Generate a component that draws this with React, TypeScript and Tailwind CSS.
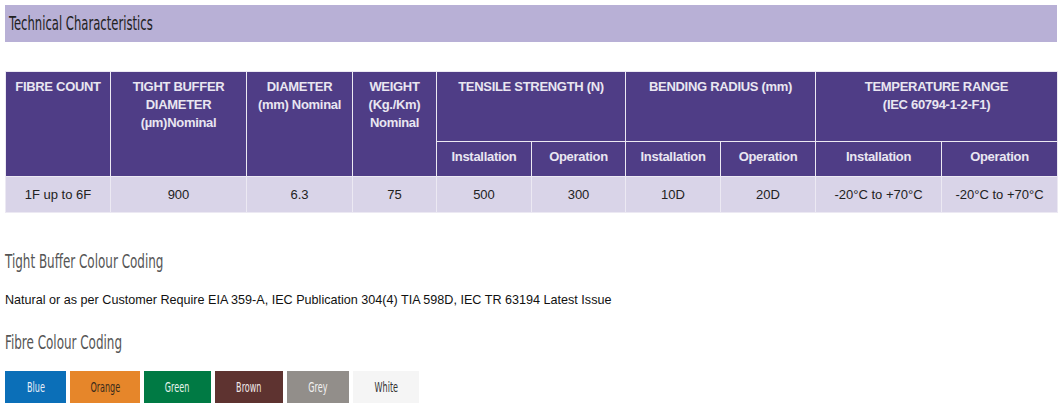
import React from "react";

const cond = "font-['DejaVu_Sans_Condensed',sans-serif]";

const swatches = [
  { name: "Blue", bg: "bg-[#0b6fb8]", fg: "text-[#e6eef8]", w: "w-[61px]" },
  { name: "Orange", bg: "bg-[#e6862a]", fg: "text-[#3a2a1a]", w: "w-[70px]" },
  { name: "Green", bg: "bg-[#007a44]", fg: "text-[#e6f4ec]", w: "w-[67px]" },
  { name: "Brown", bg: "bg-[#5e3330]", fg: "text-[#f0e8e8]", w: "w-[68px]" },
  { name: "Grey", bg: "bg-[#928e8a]", fg: "text-[#f2f2f2]", w: "w-[62px]" },
  { name: "White", bg: "bg-[#f5f5f5]", fg: "text-[#333]", w: "w-[66px]" },
];

const th = "border border-[#ece9f3] align-top pt-[6px] px-1 text-center leading-[18px]";

const App = () => {
  return (
    <div className="w-[1063px] h-[409px] bg-white p-[5px] pr-[6px] font-['Liberation_Sans',Arial,sans-serif]">
      <div className="h-[37px] bg-[#b8b0d6] flex items-center pl-[4px]">
        <h2 className={`${cond} inline-block origin-left scale-x-[0.68] whitespace-nowrap text-[19px] text-[#222]`}>
          Technical Characteristics
        </h2>
      </div>

      <table className="mt-[29px] w-[1052px] table-fixed border-collapse text-[13px]">
        <colgroup>
          <col className="w-[105px]" />
          <col className="w-[136px]" />
          <col className="w-[106px]" />
          <col className="w-[84px]" />
          <col className="w-[95px]" />
          <col className="w-[94px]" />
          <col className="w-[95px]" />
          <col className="w-[95px]" />
          <col className="w-[126px]" />
          <col className="w-[116px]" />
        </colgroup>
        <thead className="bg-[#4f3d86] text-[#e9e6f1] font-bold tracking-[-0.3px]">
          <tr className="h-[70px]">
            <th rowSpan={2} className={th}>FIBRE COUNT</th>
            <th rowSpan={2} className={th}>TIGHT BUFFER<br />DIAMETER<br />(µm)Nominal</th>
            <th rowSpan={2} className={th}>DIAMETER<br />(mm) Nominal</th>
            <th rowSpan={2} className={th}>WEIGHT<br />(Kg./Km)<br />Nominal</th>
            <th colSpan={2} className={th}>TENSILE STRENGTH (N)</th>
            <th colSpan={2} className={th}>BENDING RADIUS (mm)</th>
            <th colSpan={2} className={th}>TEMPERATURE RANGE<br />(IEC 60794-1-2-F1)</th>
          </tr>
          <tr className="h-[35px]">
            <th className={th}>Installation</th>
            <th className={th}>Operation</th>
            <th className={th}>Installation</th>
            <th className={th}>Operation</th>
            <th className={th}>Installation</th>
            <th className={th}>Operation</th>
          </tr>
        </thead>
        <tbody className="bg-[#d9d4e8] text-[#222]">
          <tr className="h-[36px]">
            {["1F up to 6F", "900", "6.3", "75", "500", "300", "10D", "20D", "-20°C to +70°C", "-20°C to +70°C"].map((v, i) => (
              <td key={i} className="border border-[#ece9f3] text-center align-middle">{v}</td>
            ))}
          </tr>
        </tbody>
      </table>

      <h3 className="mt-[36px] h-[24px] leading-[24px]">
        <span className={`${cond} inline-block origin-left scale-x-[0.7] whitespace-nowrap text-[19px] text-[#555]`}>
          Tight Buffer Colour Coding
        </span>
      </h3>
      <p className="mt-[18px] leading-[18px] text-[12.6px] text-[#111]">
        Natural or as per Customer Require EIA 359-A, IEC Publication 304(4) TIA 598D, IEC TR 63194 Latest Issue
      </p>

      <h3 className="mt-[21px] h-[24px] leading-[24px]">
        <span className={`${cond} inline-block origin-left scale-x-[0.7] whitespace-nowrap text-[19px] text-[#555]`}>
          Fibre Colour Coding
        </span>
      </h3>
      <div className="mt-[17px] flex gap-[4px]">
        {swatches.map((s) => (
          <div key={s.name} className={`${s.bg} ${s.fg} ${s.w} h-[32px] flex items-center justify-center`}>
            <span className={`${cond} inline-block scale-x-[0.64] text-[14px]`}>{s.name}</span>
          </div>
        ))}
      </div>
    </div>
  );
};

export default App;
